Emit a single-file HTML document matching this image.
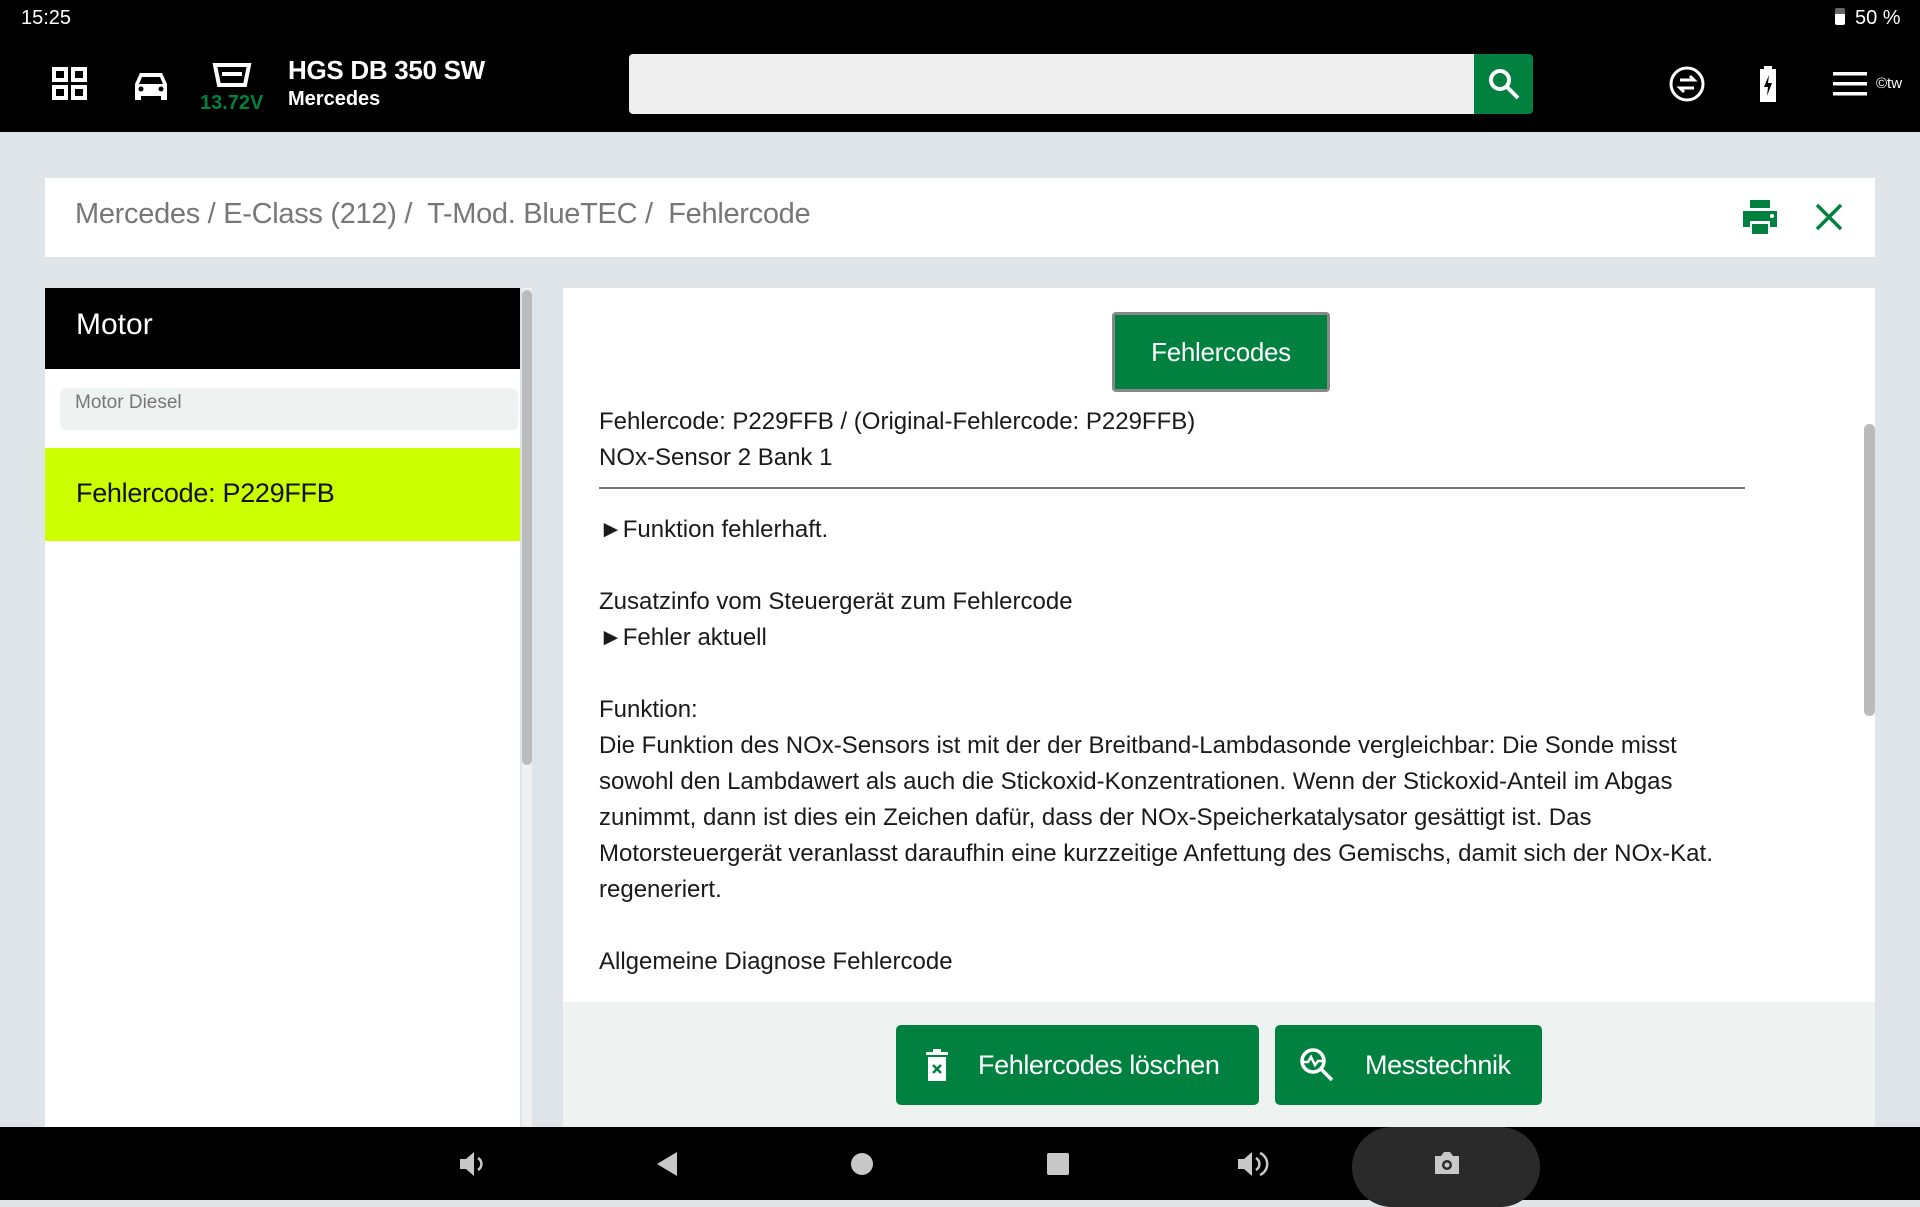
<!DOCTYPE html>
<html><head><meta charset="utf-8"><style>
*{margin:0;padding:0;box-sizing:border-box}
body{width:1920px;height:1200px;background:#dfe4e8;font-family:"Liberation Sans","DejaVu Sans",sans-serif;position:relative;overflow:hidden}
.abs{position:absolute}
.top{left:0;top:0;width:1920px;height:132px;background:#000;color:#fff}
.txt{font-size:24px;color:#1a1a1a;left:599px;white-space:nowrap}
.btn{background:#00813f;color:#fff;border-radius:5px;display:flex;align-items:center}
</style></head><body>
<div class="abs top">
 <div class="abs" style="left:21px;top:7px;font-size:20px">15:25</div>
 <div class="abs" style="left:1835px;top:8px;width:10px;height:17px;background:#fff;border-top:6px solid #666;border-radius:2px"></div>
 <div class="abs" style="left:1855px;top:7px;font-size:20px">50 %</div>
 <svg class="abs" style="left:51px;top:66px" width="40" height="36" viewBox="0 0 40 36" fill="none" stroke="#fff" stroke-width="4"><rect x="3" y="3" width="12" height="11"/><rect x="22" y="3" width="12" height="11"/><rect x="3" y="21" width="12" height="11"/><rect x="22" y="21" width="12" height="11"/></svg>
 <svg class="abs" style="left:133px;top:70px" width="36" height="32" viewBox="0 0 36 32" fill="#fff"><path d="M7 3h22l5 11v16h-6v-4H8v4H2V14z M9 7l-3 7h24l-3-7z"/><circle cx="8" cy="19" r="2.5" fill="#000"/><circle cx="28" cy="19" r="2.5" fill="#000"/></svg>
 <svg class="abs" style="left:212px;top:62px" width="40" height="26" viewBox="0 0 40 26" fill="none" stroke="#fff" stroke-width="4"><path d="M3 3h34l-4 20H7z M10 12h20"/></svg>
 <div class="abs" style="left:200px;top:92px;font-size:20px;color:#00813f;font-weight:bold">13.72V</div>
 <div class="abs" style="left:288px;top:55px;font-size:26px;font-weight:bold;letter-spacing:-0.3px">HGS DB 350 SW</div>
 <div class="abs" style="left:288px;top:88px;font-size:20px;font-weight:bold">Mercedes</div>
 <div class="abs" style="left:629px;top:54px;width:845px;height:60px;background:#eee;border-radius:4px 0 0 4px"></div>
 <div class="abs" style="left:1474px;top:54px;width:59px;height:60px;background:#00813f;border-radius:0 4px 4px 0"></div>
 <svg class="abs" style="left:1487px;top:67px" width="34" height="34" viewBox="0 0 34 34" fill="none" stroke="#fff" stroke-width="4"><circle cx="13" cy="13" r="9"/><path d="M20 20l11 11"/></svg>
 <svg class="abs" style="left:1668px;top:65px" width="38" height="38" viewBox="0 0 38 38" fill="none" stroke="#fff" stroke-width="3"><circle cx="19" cy="19" r="16"/><path d="M12 15h14l-4-4 M26 23H12l4 4"/></svg>
 <svg class="abs" style="left:1758px;top:65px" width="20" height="38" viewBox="0 0 20 38" fill="#fff"><path d="M6 1h8v3h4v33H2V4h4z"/><path d="M11 10l-5 12h4l-1 9 5-13h-4z" fill="#000"/></svg>
 <svg class="abs" style="left:1833px;top:72px" width="34" height="24" viewBox="0 0 34 24" fill="#fff"><rect y="0" width="34" height="3.5"/><rect y="10" width="34" height="3.5"/><rect y="20" width="34" height="3.5"/></svg>
 <div class="abs" style="left:1876px;top:75px;font-size:15px">©tw</div>
</div>

<div class="abs" style="left:45px;top:178px;width:1830px;height:79px;background:#fff"></div>
<div class="abs" style="left:75px;top:198px;font-size:29px;color:#777;white-space:nowrap;letter-spacing:-0.3px">Mercedes / E-Class (212) /&nbsp; T-Mod. BlueTEC /&nbsp; Fehlercode</div>
<svg class="abs" style="left:1741px;top:199px" width="38" height="36" viewBox="0 0 38 36" fill="#00813f"><rect x="9" y="1" width="20" height="8"/><path d="M2 12h34v16h-7v-6H9v6H2z"/><rect x="11" y="25" width="16" height="10"/><circle cx="31" cy="17" r="2" fill="#fff"/></svg>
<svg class="abs" style="left:1815px;top:203px" width="28" height="28" viewBox="0 0 28 28" stroke="#00813f" stroke-width="3.5"><path d="M2 2l24 24M26 2L2 26"/></svg>

<div class="abs" style="left:45px;top:288px;width:475px;height:839px;background:#fff"></div>
<div class="abs" style="left:45px;top:288px;width:475px;height:81px;background:#000;color:#fff;font-size:30px;padding:20px 0 0 31px">Motor</div>
<div class="abs" style="left:60px;top:388px;width:458px;height:42px;background:#eef2f1;border-radius:6px;font-size:19px;color:#777;padding:4px 0 0 15px">Motor Diesel</div>
<div class="abs" style="left:45px;top:448px;width:475px;height:93px;background:#ccff00;font-size:27px;color:#111;padding:30px 0 0 31px;letter-spacing:-0.3px">Fehlercode: P229FFB</div>
<div class="abs" style="left:522px;top:288px;width:10px;height:839px;background:#f0f0f0"></div>
<div class="abs" style="left:522px;top:290px;width:10px;height:475px;background:#bbb;border-radius:5px"></div>

<div class="abs" style="left:563px;top:288px;width:1312px;height:839px;background:#fff"></div>
<div class="abs" style="left:563px;top:1002px;width:1312px;height:125px;background:#eef3f1"></div>
<div class="abs btn" style="left:1112px;top:312px;width:218px;height:80px;border:3px solid #888;justify-content:center;font-size:26px;border-radius:4px;letter-spacing:-0.3px">Fehlercodes</div>
<div class="abs" style="left:1864px;top:424px;width:11px;height:292px;background:#bbb;border-radius:5px"></div>

<div class="abs txt" style="top:408px">Fehlercode: P229FFB / (Original-Fehlercode: P229FFB)</div>
<div class="abs txt" style="top:444px">NOx-Sensor 2 Bank 1</div>
<div class="abs" style="left:599px;top:487px;width:1146px;height:2px;background:#777"></div>
<div class="abs txt" style="top:516px">►Funktion fehlerhaft.</div>
<div class="abs txt" style="top:588px">Zusatzinfo vom Steuergerät zum Fehlercode</div>
<div class="abs txt" style="top:624px">►Fehler aktuell</div>
<div class="abs txt" style="top:696px">Funktion:</div>
<div class="abs txt" style="top:732px">Die Funktion des NOx-Sensors ist mit der der Breitband-Lambdasonde vergleichbar: Die Sonde misst</div>
<div class="abs txt" style="top:768px">sowohl den Lambdawert als auch die Stickoxid-Konzentrationen. Wenn der Stickoxid-Anteil im Abgas</div>
<div class="abs txt" style="top:804px">zunimmt, dann ist dies ein Zeichen dafür, dass der NOx-Speicherkatalysator gesättigt ist. Das</div>
<div class="abs txt" style="top:840px">Motorsteuergerät veranlasst daraufhin eine kurzzeitige Anfettung des Gemischs, damit sich der NOx-Kat.</div>
<div class="abs txt" style="top:876px">regeneriert.</div>
<div class="abs txt" style="top:948px">Allgemeine Diagnose Fehlercode</div>

<div class="abs btn" style="left:896px;top:1025px;width:363px;height:80px;font-size:27px;letter-spacing:-0.4px">
 <svg style="margin:0 30px 0 30px" width="22" height="32" viewBox="0 0 22 32" fill="#fff"><rect x="0" y="3" width="22" height="3"/><rect x="7" y="0" width="8" height="3"/><path d="M2 8h18v24H2z"/><path d="M7 16l8 8M15 16l-8 8" stroke="#00813f" stroke-width="2.5"/></svg>Fehlercodes löschen</div>
<div class="abs btn" style="left:1275px;top:1025px;width:267px;height:80px;font-size:27px;letter-spacing:-0.4px">
 <svg style="margin:0 30px 0 24px" width="36" height="36" viewBox="0 0 36 36" fill="none" stroke="#fff" stroke-width="3.5"><circle cx="14" cy="14" r="11"/><path d="M22 22l11 11"/><path d="M4 15h5l3-5 4 8 3-4h5" stroke-width="2.5"/></svg>Messtechnik</div>

<div class="abs" style="left:0;top:1127px;width:1920px;height:73px;background:#000"></div>
<div class="abs" style="left:1352px;top:1127px;width:188px;height:80px;background:#2a2a2a;border-radius:40px"></div>
<svg class="abs" style="left:458px;top:1150px" width="30" height="28" viewBox="0 0 30 28" fill="#c8c8c8"><path d="M2 9h6l8-7v24l-8-7H2z"/><path d="M20 8a7 7 0 0 1 0 12" stroke="#c8c8c8" stroke-width="2.5" fill="none"/></svg>
<svg class="abs" style="left:655px;top:1151px" width="24" height="26" viewBox="0 0 24 26" fill="#c8c8c8"><path d="M22 1v24L2 13z"/></svg>
<div class="abs" style="left:851px;top:1153px;width:22px;height:22px;border-radius:50%;background:#c8c8c8"></div>
<div class="abs" style="left:1047px;top:1153px;width:22px;height:22px;border-radius:2px;background:#c8c8c8"></div>
<svg class="abs" style="left:1236px;top:1150px" width="34" height="28" viewBox="0 0 34 28" fill="#c8c8c8"><path d="M2 9h6l8-7v24l-8-7H2z"/><path d="M20 8a7 7 0 0 1 0 12M24 3a12 12 0 0 1 0 22" stroke="#c8c8c8" stroke-width="2.5" fill="none"/></svg>
<svg class="abs" style="left:1433px;top:1151px" width="28" height="24" viewBox="0 0 28 24" fill="#c8c8c8"><path d="M2 5h6l3-4h6l3 4h6v18H2z"/><circle cx="14" cy="14" r="5" fill="#2a2a2a"/><circle cx="14" cy="14" r="2.5"/></svg>
</body></html>
